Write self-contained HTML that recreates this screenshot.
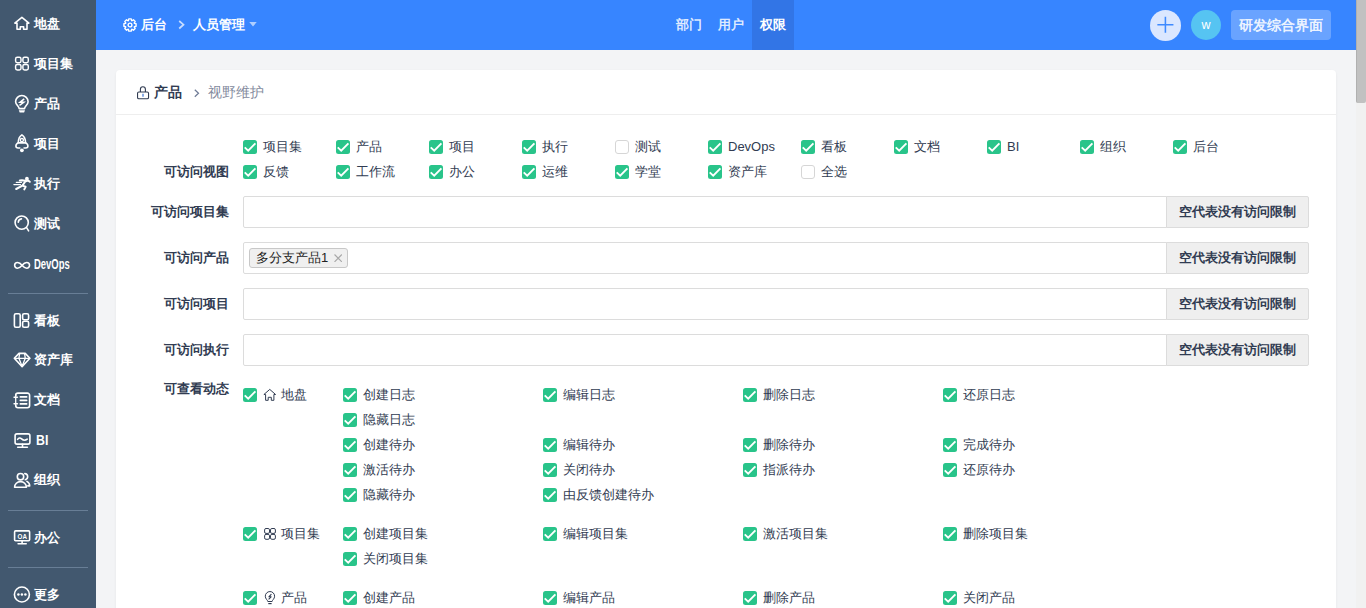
<!DOCTYPE html>
<html><head><meta charset="utf-8">
<style>
*{box-sizing:border-box;margin:0;padding:0}
html,body{width:1366px;height:608px;overflow:hidden}
body{font-family:"Liberation Sans",sans-serif;font-size:13px;color:#313c52;background:#f3f4f6;position:relative}
#side{position:absolute;left:0;top:0;width:96px;height:608px;background:#42586f}
.mi{position:absolute;left:0;width:96px;height:40px;color:#fff;font-weight:bold;font-size:13px}
.mi svg{position:absolute;left:14px;top:12.5px;width:15px;height:15px;overflow:visible}
.mi span{position:absolute;left:34px;top:0;line-height:40px;white-space:nowrap}
.mi span.dev{display:inline-block;font-size:15.5px;top:0px;transform:scaleX(.61);transform-origin:0 50%}
.mi span.bi{display:inline-block;left:36px;font-size:14px;transform:scaleX(.88);transform-origin:0 50%}
.dv{position:absolute;left:8px;width:80px;height:1px;background:#687e96}
#top{position:absolute;left:96px;top:0;width:1260px;height:50px;background:#3785ff;color:#fff}
#top .gear{position:absolute;left:27.2px;top:17.9px;width:14px;height:14px;overflow:visible}
#top .chev{position:absolute;width:8px;height:10px}
#top .t1{position:absolute;top:0;line-height:50px;font-size:13px;font-weight:bold}
#top .nav{position:absolute;top:0;width:42px;height:50px;line-height:50px;text-align:center;font-weight:bold;color:rgba(255,255,255,.85)}
#top .nav.act{background:#3275e6;color:#fff}
#top .plus{position:absolute;left:1054px;top:10px;width:31px;height:31px;border-radius:50%;background:#dbe7ff}
#top .plus svg{width:31px;height:31px}
#top .ava{position:absolute;left:1095px;top:10px;width:30px;height:30px;border-radius:50%;background:#56c4f2;text-align:center;line-height:30px;font-size:12.5px}
#top .sw{position:absolute;left:1135px;top:10px;width:100px;height:30px;border-radius:4px;background:rgba(255,255,255,.25);line-height:30px;text-align:center;font-size:14px;font-weight:bold;color:rgba(255,255,255,.9)}
#card{position:absolute;left:116px;top:70px;width:1220px;height:560px;background:#fff;border-radius:4px;box-shadow:0 1px 3px rgba(0,0,0,.06)}

#card .lock{position:absolute;width:14px;height:14px}
#card .hd1{position:absolute;left:38px;top:0;line-height:44px;font-size:14px;font-weight:bold}
#card .hchev{position:absolute;left:76px;top:18px;width:8px;height:10px}
#card .hd2{position:absolute;left:92px;top:0;line-height:44px;font-size:14px;color:#838a9d}
#card .hline{position:absolute;left:0;top:44px;width:1220px;height:1px;background:#eee}
.cb{position:absolute;width:14px;height:14px;border-radius:2.5px;background:#29c48a}
.cb svg{position:absolute;left:0;top:0;width:14px;height:14px}
.cb path{fill:none;stroke:#fff;stroke-width:1.9}
.cb.off{background:#fff;border:1px solid #d6d6d6;border-radius:3px}

.cl{position:absolute;line-height:14px;white-space:nowrap}
.cl.hi{padding-left:17.5px}
.cl .ic{position:absolute;left:0;top:0;width:14px;height:14px;overflow:visible}
.lb{position:absolute;right:1107px;line-height:14px;font-weight:bold;white-space:nowrap}
.inp{position:absolute;left:127px;width:924px;height:32px;border:1px solid #dcdcdc;border-radius:2px 0 0 2px;background:#fff}
.addon{position:absolute;left:1050px;width:143px;height:32px;border:1px solid #dcdcdc;border-radius:0 2px 2px 0;background:#efefef;text-align:center;line-height:30px;font-weight:bold}
.tag{position:absolute;left:5px;top:5px;width:99px;height:20px;line-height:18px;padding:0 0 0 6px;border:1px solid #c8c8c8;border-radius:3px;background:#f0f0f0;white-space:nowrap;color:#222;line-height:17.5px}
.tag svg{position:absolute;left:84px;top:4.6px;width:8.4px;height:8.4px}
.tag i{font-style:normal;color:#999;margin-left:8px}
#sb{position:absolute;left:1356px;top:0;width:10px;height:608px;background:#f1f1f1}
#sbt{position:absolute;left:1356px;top:0;width:10px;height:102.5px;background:#c1c1c1;border-left:1px solid #b0b0b0;border-radius:0 0 2px 2px}
</style></head><body>
<div id="side">
<div class="mi" style="top:3.5px"><span>地盘</span></div>
<div class="mi" style="top:43.5px"><span>项目集</span></div>
<div class="mi" style="top:83.5px"><span>产品</span></div>
<div class="mi" style="top:123.5px"><span>项目</span></div>
<div class="mi" style="top:163.5px"><span>执行</span></div>
<div class="mi" style="top:203.5px"><span>测试</span></div>
<div class="mi" style="top:244px"><span class="dev">DevOps</span></div>
<div class="mi" style="top:300.5px"><span>看板</span></div>
<div class="mi" style="top:340px"><span>资产库</span></div>
<div class="mi" style="top:380px"><span>文档</span></div>
<div class="mi" style="top:420px"><span class="bi">BI</span></div>
<div class="mi" style="top:460px"><span>组织</span></div>
<div class="mi" style="top:517.5px"><span>办公</span></div>
<div class="mi" style="top:575px"><span>更多</span></div>
<div class="dv" style="top:293px"></div>
<div class="dv" style="top:510px"></div>
<div class="dv" style="top:567px"></div>
<svg style="position:absolute;left:0;top:0" width="96" height="608" viewBox="0 0 96 608">
<g stroke="#fff" fill="none" stroke-width="1.6" stroke-linecap="round" stroke-linejoin="round">
<path d="M17 29.3V23.1H14.8L21.9 17.4 28.9 23.1H27V29.3H23.6V26.8H20.3V29.3Z"/>
<g stroke-width="1.45"><rect x="15.6" y="57.2" width="5.4" height="5.5" rx="1.7"/><rect x="22.9" y="57.2" width="5.4" height="5.5" rx="1.7"/><rect x="15.6" y="64.4" width="5.4" height="5.5" rx="1.7"/><rect x="22.9" y="64.4" width="5.4" height="5.5" rx="1.7"/></g>
<path d="M24.2 98.9L20 102.3H23.7L19.5 105.3" stroke-width="1.5" stroke-linecap="butt" stroke-linejoin="miter"/>
<path d="M19.2 108.6C19 106 15.6 104.8 15.6 101.8A6.25 6.25 0 0 1 28.1 101.8C28.1 104.8 24.7 106 24.5 108.6Z"/>
<path d="M18.3 143V142.6C18.3 139 19.6 136.3 21.9 134.9C24.2 136.3 25.5 139 25.5 142.6V143M17.6 142.9H26.2M18.3 143.1C16.7 143.6 15.9 144.8 15.9 146C15.9 147.3 16.9 148 18.1 148H19.8M25.5 143.1C27.1 143.6 27.9 144.8 27.9 146C27.9 147.3 26.9 148 25.7 148H24"/><circle cx="21.9" cy="140.1" r="1.6" stroke-width="1.3"/>
<path d="M25.4 181.3L22.4 185.6L16.2 189M22.4 185.6L25.6 186.8L24.3 189.4M25.8 181.3L28.2 180.6L29.8 181.8M25.2 180.7L22 180.2L19.8 180.6" stroke-width="2"/><path d="M16.3 182.3H21.5M13.9 184.6H20.5" stroke-width="1.3"/>
<circle cx="21.7" cy="222.6" r="6.6"/><path d="M26.6 227.6L28.6 230.8"/><path d="M18.3 222.3A3.6 3.6 0 0 1 21.5 218.9"/>
<path d="M22.1 265.3C20.5 263.3 19.5 262.5 17.5 262.5A2.85 2.85 0 0 0 17.5 268.2C19.5 268.2 20.5 267.3 22.1 265.3C23.7 263.3 24.7 262.5 26.7 262.5A2.85 2.85 0 0 1 26.7 268.2C24.7 268.2 23.7 267.3 22.1 265.3Z"/>
<rect x="14.4" y="313.8" width="5.8" height="13.4" rx="1.5"/><rect x="22.6" y="313.8" width="6" height="6" rx="1.5"/><rect x="22.6" y="321.2" width="6" height="6" rx="1.5"/>
<path d="M19 353.4H25.2L29.9 358.3 22.1 366.6 14.3 358.3Z"/><path d="M14.6 358.3H29.6M19.6 353.6L18.9 358.3 22.1 366.2 25.3 358.3 24.6 353.6" stroke-width="1.3"/>
<path d="M15.7 395.3V395.2A2.2 2.2 0 0 1 17.9 393.1H27.4A2.2 2.2 0 0 1 29.6 395.3V405.5A2.2 2.2 0 0 1 27.4 407.7H17.9A2.2 2.2 0 0 1 15.7 405.5"/><path d="M15.7 395.3V405.5" stroke-width="1.3"/>
<path d="M14.1 397.2H17.4M14.1 403.7H17.4M20.3 396.9H26.7M20.3 400.4H26.7M20.3 403.9H26.7"/>
<rect x="15.1" y="433.9" width="14.8" height="10.2" rx="1.8"/><path d="M22.5 444.2V447.3M17.7 447.3H27.4M17.6 439.4C18.8 437.6 20.2 437.6 21.6 438.9S24.9 440.9 27.2 439.2"/>
<circle cx="20.5" cy="476.7" r="3.2"/><path d="M14.6 487.2A5.9 5.6 0 0 1 26.4 487.2Z"/><path d="M24.8 473.6A3.1 3.1 0 0 1 25.3 479.7M26.9 481.4C28.7 482.4 29.7 484 29.7 485.9H27.8"/>
<rect x="14.6" y="530.9" width="15" height="9.8" rx="1"/><path d="M22.1 540.8V543.7M18.1 543.7H26.2"/>
<circle cx="21.9" cy="594.5" r="7.5"/>
</g>
<g fill="#fff">
<path d="M18.8 110.2H25L24.1 112.6H19.7Z"/>

<circle cx="21.9" cy="150.3" r="1.9"/>
<circle cx="26.9" cy="178.7" r="1.9"/>
<circle cx="18.4" cy="594.6" r="1.25"/><circle cx="21.9" cy="594.6" r="1.25"/><circle cx="25.4" cy="594.6" r="1.25"/>
<text x="22.3" y="538.9" font-size="7.4" font-weight="bold" text-anchor="middle" font-family="Liberation Sans" transform="translate(22.2 0) scale(.85 1) translate(-22.2 0)">OA</text>
</g>
</svg>
</div>
<div id="top">
<svg class="gear" viewBox="0 0 14 14"><g stroke="#fff" fill="none" stroke-width="1.4" stroke-linejoin="round"><path d="M5.77 0.92 L8.23 0.92 L8.57 2.57 L9.02 2.76 L10.43 1.83 L12.17 3.57 L11.24 4.98 L11.43 5.43 L13.08 5.77 L13.08 8.23 L11.43 8.57 L11.24 9.02 L12.17 10.43 L10.43 12.17 L9.02 11.24 L8.57 11.43 L8.23 13.08 L5.77 13.08 L5.43 11.43 L4.98 11.24 L3.57 12.17 L1.83 10.43 L2.76 9.02 L2.57 8.57 L0.92 8.23 L0.92 5.77 L2.57 5.43 L2.76 4.98 L1.83 3.57 L3.57 1.83 L4.98 2.76 L5.43 2.57Z"/><circle cx="7" cy="7" r="1.9"/></g></svg>
<span class="t1" style="left:45px">后台</span>
<svg class="chev" viewBox="0 0 8 10" style="left:82px;top:20px"><path d="M1.2 1L5.5 4.7 1.2 8.5" stroke="rgba(255,255,255,.72)" stroke-width="1.7" fill="none"/></svg>
<span class="t1" style="left:97px">人员管理</span>
<svg viewBox="0 0 10 6" style="position:absolute;left:152.7px;top:22px;width:8px;height:4.5px"><path d="M0 0h10L5 6z" fill="rgba(255,255,255,.6)"/></svg>
<div class="nav" style="left:572px">部门</div>
<div class="nav" style="left:614px">用户</div>
<div class="nav act" style="left:656px">权限</div>
<div class="plus"><svg viewBox="0 0 32 32"><path d="M7.6 15.3H24.2M15.9 7V23.6" stroke="#3f8aff" stroke-width="1.6"/></svg></div>
<div class="ava">w</div>
<div class="sw">研发综合界面</div>
</div>
<div id="card"><svg class="lock" viewBox="0 0 14 14" style="left:21px;top:16px;overflow:visible"><g fill="none" stroke="#313c52" stroke-width="1.1"><rect x="0.55" y="6.05" width="11" height="6.7" rx="1.3"/><path d="M3.4 6.05V3.2A2.5 2.5 0 0 1 8.4 3.2V6.05"/><path d="M6 7.7V10.8" stroke-width="1.3" stroke="#4a7fd6"/></g></svg><div class="hd1">产品</div><svg class="hchev" viewBox="0 0 8 10"><path d="M2.8 1.7L6.5 5.2 2.8 8.7" stroke="#6f7b96" stroke-width="1.25" fill="none"/></svg><div class="hd2">视野维护</div><div class="hline"></div><div class="cb" style="left:127px;top:70px"><svg viewBox="0 0 14 14"><path d="M1.7 7.4L5.2 10.7 12.4 3.3"/></svg></div><div class="cl" style="left:147px;top:70px">项目集</div>
<div class="cb" style="left:220px;top:70px"><svg viewBox="0 0 14 14"><path d="M1.7 7.4L5.2 10.7 12.4 3.3"/></svg></div><div class="cl" style="left:240px;top:70px">产品</div>
<div class="cb" style="left:313px;top:70px"><svg viewBox="0 0 14 14"><path d="M1.7 7.4L5.2 10.7 12.4 3.3"/></svg></div><div class="cl" style="left:333px;top:70px">项目</div>
<div class="cb" style="left:406px;top:70px"><svg viewBox="0 0 14 14"><path d="M1.7 7.4L5.2 10.7 12.4 3.3"/></svg></div><div class="cl" style="left:426px;top:70px">执行</div>
<div class="cb off" style="left:499px;top:70px"></div><div class="cl" style="left:519px;top:70px">测试</div>
<div class="cb" style="left:592px;top:70px"><svg viewBox="0 0 14 14"><path d="M1.7 7.4L5.2 10.7 12.4 3.3"/></svg></div><div class="cl" style="left:612px;top:70px">DevOps</div>
<div class="cb" style="left:685px;top:70px"><svg viewBox="0 0 14 14"><path d="M1.7 7.4L5.2 10.7 12.4 3.3"/></svg></div><div class="cl" style="left:705px;top:70px">看板</div>
<div class="cb" style="left:778px;top:70px"><svg viewBox="0 0 14 14"><path d="M1.7 7.4L5.2 10.7 12.4 3.3"/></svg></div><div class="cl" style="left:798px;top:70px">文档</div>
<div class="cb" style="left:871px;top:70px"><svg viewBox="0 0 14 14"><path d="M1.7 7.4L5.2 10.7 12.4 3.3"/></svg></div><div class="cl" style="left:891px;top:70px">BI</div>
<div class="cb" style="left:964px;top:70px"><svg viewBox="0 0 14 14"><path d="M1.7 7.4L5.2 10.7 12.4 3.3"/></svg></div><div class="cl" style="left:984px;top:70px">组织</div>
<div class="cb" style="left:1057px;top:70px"><svg viewBox="0 0 14 14"><path d="M1.7 7.4L5.2 10.7 12.4 3.3"/></svg></div><div class="cl" style="left:1077px;top:70px">后台</div>
<div class="cb" style="left:127px;top:95px"><svg viewBox="0 0 14 14"><path d="M1.7 7.4L5.2 10.7 12.4 3.3"/></svg></div><div class="cl" style="left:147px;top:95px">反馈</div>
<div class="cb" style="left:220px;top:95px"><svg viewBox="0 0 14 14"><path d="M1.7 7.4L5.2 10.7 12.4 3.3"/></svg></div><div class="cl" style="left:240px;top:95px">工作流</div>
<div class="cb" style="left:313px;top:95px"><svg viewBox="0 0 14 14"><path d="M1.7 7.4L5.2 10.7 12.4 3.3"/></svg></div><div class="cl" style="left:333px;top:95px">办公</div>
<div class="cb" style="left:406px;top:95px"><svg viewBox="0 0 14 14"><path d="M1.7 7.4L5.2 10.7 12.4 3.3"/></svg></div><div class="cl" style="left:426px;top:95px">运维</div>
<div class="cb" style="left:499px;top:95px"><svg viewBox="0 0 14 14"><path d="M1.7 7.4L5.2 10.7 12.4 3.3"/></svg></div><div class="cl" style="left:519px;top:95px">学堂</div>
<div class="cb" style="left:592px;top:95px"><svg viewBox="0 0 14 14"><path d="M1.7 7.4L5.2 10.7 12.4 3.3"/></svg></div><div class="cl" style="left:612px;top:95px">资产库</div>
<div class="cb off" style="left:685px;top:95px"></div><div class="cl" style="left:705px;top:95px">全选</div>
<div class="lb" style="top:95px">可访问视图</div>
<div class="lb" style="top:135px">可访问项目集</div>
<div class="inp" style="top:126px"></div><div class="addon" style="top:126px">空代表没有访问限制</div>
<div class="lb" style="top:181px">可访问产品</div>
<div class="inp" style="top:172px"><span class="tag">多分支产品1<svg viewBox="0 0 8 8"><path d="M0.5 0.5L7.5 7.5M7.5 0.5L0.5 7.5" stroke="#a8a8a8" stroke-width="1.1"/></svg></span></div><div class="addon" style="top:172px">空代表没有访问限制</div>
<div class="lb" style="top:227px">可访问项目</div>
<div class="inp" style="top:218px"></div><div class="addon" style="top:218px">空代表没有访问限制</div>
<div class="lb" style="top:273px">可访问执行</div>
<div class="inp" style="top:264px"></div><div class="addon" style="top:264px">空代表没有访问限制</div>
<div class="lb" style="top:312px">可查看动态</div>
<div class="cb" style="left:127px;top:318px"><svg viewBox="0 0 14 14"><path d="M1.7 7.4L5.2 10.7 12.4 3.3"/></svg></div><div class="cl hi" style="left:147px;top:318px"><svg class="ic" viewBox="0 0 14 14"><path fill="none" stroke="#313c52" stroke-width="1" stroke-linejoin="round" d="M2.6 12.3V6.5H0.9L6.75 1.4L12.6 6.5H10.9V12.3H8.3V9.3H5.2V12.3Z"/></svg>地盘</div>
<div class="cb" style="left:227px;top:318px"><svg viewBox="0 0 14 14"><path d="M1.7 7.4L5.2 10.7 12.4 3.3"/></svg></div><div class="cl" style="left:247px;top:318px">创建日志</div>
<div class="cb" style="left:427px;top:318px"><svg viewBox="0 0 14 14"><path d="M1.7 7.4L5.2 10.7 12.4 3.3"/></svg></div><div class="cl" style="left:447px;top:318px">编辑日志</div>
<div class="cb" style="left:627px;top:318px"><svg viewBox="0 0 14 14"><path d="M1.7 7.4L5.2 10.7 12.4 3.3"/></svg></div><div class="cl" style="left:647px;top:318px">删除日志</div>
<div class="cb" style="left:827px;top:318px"><svg viewBox="0 0 14 14"><path d="M1.7 7.4L5.2 10.7 12.4 3.3"/></svg></div><div class="cl" style="left:847px;top:318px">还原日志</div>
<div class="cb" style="left:227px;top:343px"><svg viewBox="0 0 14 14"><path d="M1.7 7.4L5.2 10.7 12.4 3.3"/></svg></div><div class="cl" style="left:247px;top:343px">隐藏日志</div>
<div class="cb" style="left:227px;top:368px"><svg viewBox="0 0 14 14"><path d="M1.7 7.4L5.2 10.7 12.4 3.3"/></svg></div><div class="cl" style="left:247px;top:368px">创建待办</div>
<div class="cb" style="left:427px;top:368px"><svg viewBox="0 0 14 14"><path d="M1.7 7.4L5.2 10.7 12.4 3.3"/></svg></div><div class="cl" style="left:447px;top:368px">编辑待办</div>
<div class="cb" style="left:627px;top:368px"><svg viewBox="0 0 14 14"><path d="M1.7 7.4L5.2 10.7 12.4 3.3"/></svg></div><div class="cl" style="left:647px;top:368px">删除待办</div>
<div class="cb" style="left:827px;top:368px"><svg viewBox="0 0 14 14"><path d="M1.7 7.4L5.2 10.7 12.4 3.3"/></svg></div><div class="cl" style="left:847px;top:368px">完成待办</div>
<div class="cb" style="left:227px;top:393px"><svg viewBox="0 0 14 14"><path d="M1.7 7.4L5.2 10.7 12.4 3.3"/></svg></div><div class="cl" style="left:247px;top:393px">激活待办</div>
<div class="cb" style="left:427px;top:393px"><svg viewBox="0 0 14 14"><path d="M1.7 7.4L5.2 10.7 12.4 3.3"/></svg></div><div class="cl" style="left:447px;top:393px">关闭待办</div>
<div class="cb" style="left:627px;top:393px"><svg viewBox="0 0 14 14"><path d="M1.7 7.4L5.2 10.7 12.4 3.3"/></svg></div><div class="cl" style="left:647px;top:393px">指派待办</div>
<div class="cb" style="left:827px;top:393px"><svg viewBox="0 0 14 14"><path d="M1.7 7.4L5.2 10.7 12.4 3.3"/></svg></div><div class="cl" style="left:847px;top:393px">还原待办</div>
<div class="cb" style="left:227px;top:418px"><svg viewBox="0 0 14 14"><path d="M1.7 7.4L5.2 10.7 12.4 3.3"/></svg></div><div class="cl" style="left:247px;top:418px">隐藏待办</div>
<div class="cb" style="left:427px;top:418px"><svg viewBox="0 0 14 14"><path d="M1.7 7.4L5.2 10.7 12.4 3.3"/></svg></div><div class="cl" style="left:447px;top:418px">由反馈创建待办</div>
<div class="cb" style="left:127px;top:457px"><svg viewBox="0 0 14 14"><path d="M1.7 7.4L5.2 10.7 12.4 3.3"/></svg></div><div class="cl hi" style="left:147px;top:457px"><svg class="ic" viewBox="0 0 14 14"><g fill="none" stroke="#313c52" stroke-width="1"><rect x="1.6" y="1.5" width="4.9" height="4.9" rx="1.4"/><rect x="7.5" y="1.5" width="4.9" height="4.9" rx="1.4"/><rect x="1.6" y="7.4" width="4.9" height="4.9" rx="1.4"/><rect x="7.5" y="7.4" width="4.9" height="4.9" rx="1.4"/></g></svg>项目集</div>
<div class="cb" style="left:227px;top:457px"><svg viewBox="0 0 14 14"><path d="M1.7 7.4L5.2 10.7 12.4 3.3"/></svg></div><div class="cl" style="left:247px;top:457px">创建项目集</div>
<div class="cb" style="left:427px;top:457px"><svg viewBox="0 0 14 14"><path d="M1.7 7.4L5.2 10.7 12.4 3.3"/></svg></div><div class="cl" style="left:447px;top:457px">编辑项目集</div>
<div class="cb" style="left:627px;top:457px"><svg viewBox="0 0 14 14"><path d="M1.7 7.4L5.2 10.7 12.4 3.3"/></svg></div><div class="cl" style="left:647px;top:457px">激活项目集</div>
<div class="cb" style="left:827px;top:457px"><svg viewBox="0 0 14 14"><path d="M1.7 7.4L5.2 10.7 12.4 3.3"/></svg></div><div class="cl" style="left:847px;top:457px">删除项目集</div>
<div class="cb" style="left:227px;top:482px"><svg viewBox="0 0 14 14"><path d="M1.7 7.4L5.2 10.7 12.4 3.3"/></svg></div><div class="cl" style="left:247px;top:482px">关闭项目集</div>
<div class="cb" style="left:127px;top:521px"><svg viewBox="0 0 14 14"><path d="M1.7 7.4L5.2 10.7 12.4 3.3"/></svg></div><div class="cl hi" style="left:147px;top:521px"><svg class="ic" viewBox="0 0 14 14" style="top:0"><g fill="none" stroke="#313c52" stroke-width="1" stroke-linejoin="round"><path d="M4.8 10.5C4.7 9 2.3 8 2.3 5.2A4.65 4.65 0 0 1 11.6 5.2C11.6 8 9.2 9 9.1 10.5Z"/><path d="M5.3 12.6H8.6" stroke-width="1.2"/><path d="M8.4 3.2L5.9 5.8H8.1L5.6 8.3" stroke-width="1.1"/></g></svg>产品</div>
<div class="cb" style="left:227px;top:521px"><svg viewBox="0 0 14 14"><path d="M1.7 7.4L5.2 10.7 12.4 3.3"/></svg></div><div class="cl" style="left:247px;top:521px">创建产品</div>
<div class="cb" style="left:427px;top:521px"><svg viewBox="0 0 14 14"><path d="M1.7 7.4L5.2 10.7 12.4 3.3"/></svg></div><div class="cl" style="left:447px;top:521px">编辑产品</div>
<div class="cb" style="left:627px;top:521px"><svg viewBox="0 0 14 14"><path d="M1.7 7.4L5.2 10.7 12.4 3.3"/></svg></div><div class="cl" style="left:647px;top:521px">删除产品</div>
<div class="cb" style="left:827px;top:521px"><svg viewBox="0 0 14 14"><path d="M1.7 7.4L5.2 10.7 12.4 3.3"/></svg></div><div class="cl" style="left:847px;top:521px">关闭产品</div>
</div>
<div id="sb"></div><div id="sbt"></div>
</body></html>
